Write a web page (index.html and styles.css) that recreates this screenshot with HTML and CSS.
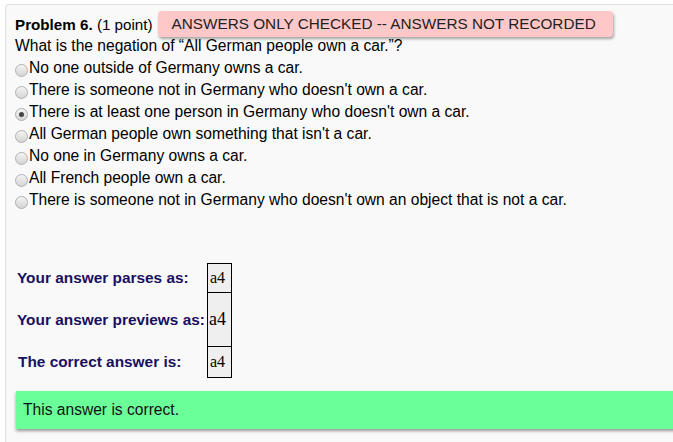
FILE: index.html
```html
<!DOCTYPE html>
<html>
<head>
<meta charset="utf-8">
<link rel="stylesheet" href="styles.css">
</head>
<body>
<div class="problem">
  <div class="header">
    <span class="title"><b>Problem 6.</b> (1 point)</span>
    <span class="badge">ANSWERS ONLY CHECKED -- ANSWERS NOT RECORDED</span>
  </div>
  <div class="question">What is the negation of “All German people own a car.”?</div>
  <ul class="options">
    <li><input type="radio" class="radio" name="q">No one outside of Germany owns a car.</li>
    <li><input type="radio" class="radio" name="q">There is someone not in Germany who doesn't own a car.</li>
    <li><input type="radio" class="radio" name="q" checked>There is at least one person in Germany who doesn't own a car.</li>
    <li><input type="radio" class="radio" name="q">All German people own something that isn't a car.</li>
    <li><input type="radio" class="radio" name="q">No one in Germany owns a car.</li>
    <li><input type="radio" class="radio" name="q">All French people own a car.</li>
    <li><input type="radio" class="radio" name="q">There is someone not in Germany who doesn't own an object that is not a car.</li>
  </ul>
  <table class="results">
    <tr class="r1"><td class="label">Your answer parses as:</td><td class="val">a4</td></tr>
    <tr class="r2"><td class="label">Your answer previews as:</td><td class="val math">a4</td></tr>
    <tr class="r3"><td class="label">The correct answer is:</td><td class="val">a4</td></tr>
  </table>
  <div class="correct">This answer is correct.</div>
</div>
</body>
</html>
```
FILE: styles.css
```css
html, body {
  margin: 0;
  padding: 0;
  overflow: hidden;
  background: #ffffff;
}
body {
  font-family: "Liberation Sans", Arial, sans-serif;
  font-size: 15.6px;
  color: #000;
}
.problem {
  margin: 4px 0 0 5px;
  width: 720px;
  height: 460px;
  border: 1px solid #dddddd;
  border-radius: 4px;
  background: #f9f9f9;
  padding: 6px 0 0 9px;
  box-sizing: border-box;
}
.header {
  display: flex;
  align-items: center;
  height: 26px;
}
.title { font-size: 15.2px; }
.title b { font-weight: bold; }
.badge {
  margin-left: 5px;
  height: 26px;
  box-sizing: border-box;
  padding: 0 17px 0 14px;
  display: flex;
  align-items: center;
  background: #ffc8c8;
  border-radius: 4px;
  box-shadow: 1px 2px 3px rgba(0,0,0,0.35);
  font-size: 15.3px;
  color: #222;
}
.question {
  line-height: 22px;
  margin-top: -2px;
}
.options {
  list-style: none;
  margin: 0;
  padding: 0;
}
.options li {
  line-height: 22px;
  display: flex;
  align-items: center;
}
.radio {
  appearance: none;
  -webkit-appearance: none;
  width: 13px;
  height: 13px;
  margin: 4px 1px 0 0;
  border-radius: 50%;
  border: 1px solid #b0b0b0;
  background: linear-gradient(#f4f4f4, #d4d4d4);
  box-sizing: border-box;
  position: relative;
  flex: none;
}
.radio:checked::after {
  content: "";
  position: absolute;
  left: 3px;
  top: 3px;
  width: 5px;
  height: 5px;
  border-radius: 50%;
  background: #444;
}
.results {
  margin-top: 52px;
  border-collapse: collapse;
  margin-left: 1px;
}
.label {
  font-family: "Liberation Sans", Arial, sans-serif;
  font-weight: bold;
  font-size: 15.4px;
  color: #1a1060;
  padding: 0 2px 0 1px;
  white-space: nowrap;
}
.val {
  border: 1px solid #000;
  background: #efefef;
  font-family: "Liberation Serif", "Times New Roman", serif;
  font-size: 16px;
  padding: 0 1px 0 2px;
  width: 20px;
}
.r1 { height: 29px; }
.r2 { height: 54px; }
.r3 { height: 31px; }
.r3 .label { padding-left: 2px; }
.math {
  font-size: 18px;
  padding: 0 1px;
}
.correct {
  margin-top: 13px;
  margin-left: 1px;
  height: 38px;
  background: #6bff99;
  box-shadow: 0 2px 3px rgba(0,0,0,0.4);
  padding-left: 7px;
  display: flex;
  align-items: center;
  color: #111;
}
```
